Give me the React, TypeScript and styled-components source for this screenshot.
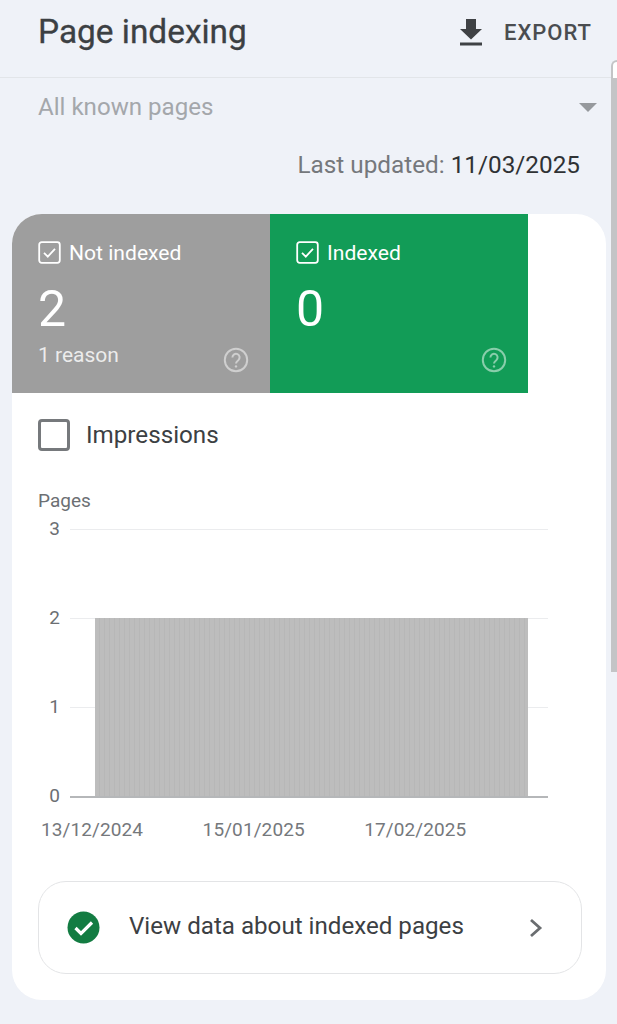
import React from "react";
import styled, { createGlobalStyle } from "styled-components";

const Global = createGlobalStyle`
  html, body { margin: 0; padding: 0; background: #eff2f8; }
  body { font-family: Roboto, "Liberation Sans", sans-serif; overflow: hidden; }
`;

const Page = styled.div`
  position: relative;
  width: 617px;
  height: 1024px;
  overflow: hidden;
  background: #eff2f8;
`;

const Header = styled.header`
  height: 78px;
  box-sizing: border-box;
  border-bottom: 1px solid #e2e5e9;
  display: flex;
  align-items: flex-start;
  justify-content: space-between;
  padding: 13px 25px 0 38px;
`;

const Title = styled.h1`
  margin: 0;
  font-size: 33.4px;
  line-height: 38px;
  font-weight: 400;
  color: #3c4043;
  -webkit-text-stroke: 0.3px #3c4043;
`;

const ExportButton = styled.div`
  display: flex;
  align-items: center;
  gap: 20px;
  height: 38px;
  font-size: 22px;
  font-weight: 500;
  letter-spacing: 1px;
  color: #4a4d50;
`;

const Filter = styled.div`
  height: 58px;
  box-sizing: border-box;
  display: flex;
  align-items: center;
  justify-content: space-between;
  padding: 0 20px 0 38px;
  font-size: 24.1px;
  color: #a4a7ab;
`;

const Caret = styled.div`
  width: 0;
  height: 0;
  border-left: 9px solid transparent;
  border-right: 9px solid transparent;
  border-top: 9px solid #96999d;
`;

const Updated = styled.div`
  height: 78px;
  box-sizing: border-box;
  padding: 14px 37px 0 0;
  text-align: right;
  font-size: 24.3px;
  line-height: 30px;
  color: #75787c;
`;

const UpdatedDate = styled.span`
  color: #2f3235;
`;

const Card = styled.section`
  margin: 0 11px 0 12px;
  height: 786px;
  background: #fff;
  border-radius: 30px;
  overflow: hidden;
`;

const Tiles = styled.div`
  display: flex;
  height: 179px;
`;

const Tile = styled.div<{ $bg: string }>`
  position: relative;
  width: 258px;
  box-sizing: border-box;
  padding: 25px 0 0 26px;
  background: ${(p) => p.$bg};
  color: #fff;
`;

const TileHead = styled.div`
  display: flex;
  align-items: center;
  gap: 8px;
  height: 26px;
  font-size: 21.1px;
`;

const TileValue = styled.div`
  margin-top: 14px;
  font-size: 50px;
  line-height: 60px;
  font-weight: 400;
`;

const TileNote = styled.div`
  margin-top: 2px;
  height: 28px;
  font-size: 21px;
  line-height: 28px;
  color: rgba(255, 255, 255, 0.82);
`;

const HelpIcon = styled.svg`
  position: absolute;
  right: 21px;
  bottom: 20px;
  width: 26px;
  height: 26px;
`;

const ImpressionRow = styled.div`
  display: flex;
  align-items: center;
  gap: 16px;
  height: 32px;
  margin: 26px 0 0 26px;
  font-size: 24.2px;
  color: #3c4043;
`;

const EmptyBox = styled.div`
  width: 32px;
  height: 32px;
  box-sizing: border-box;
  border: 3px solid #76797c;
  border-radius: 4px;
`;

const ChartTitle = styled.div`
  margin: 38px 0 0 26px;
  font-size: 19px;
  line-height: 24px;
  color: #6c6f73;
`;

const Chart = styled.div`
  margin: 16px 0 0 0;
  width: 536px;
  height: 279px;
  display: grid;
  grid-template-columns: 58px 1fr;
  grid-template-rows: 89px 89px 89px 12px;
`;

const AxisLabel = styled.div`
  font-size: 19px;
  line-height: 0;
  padding: 0 10px 0 0;
  text-align: right;
  color: #6c6f73;
  height: 0;
`;

const Plot = styled.div`
  position: relative;
  grid-row: 1 / 5;
  grid-column: 2;
`;

const BaseLine = styled.div`
  position: absolute;
  left: 0;
  right: 0;
  height: 2px;
`;

const GridLine = styled(BaseLine)`
  height: 1px;
  background: #ebecee;
`;

const AxisLine = styled(BaseLine)`
  background: #b5b7b9;
`;

const Bars = styled.div`
  position: absolute;
  left: 25px;
  top: 89px;
  width: 433px;
  height: 178px;
  background: repeating-linear-gradient(
    90deg,
    #bdbdbd 0,
    #bdbdbd 4px,
    #b7b7b7 4px,
    #b7b7b7 5px
  );
`;

const DateAxis = styled.div`
  display: flex;
  gap: 59.5px;
  margin: 10px 0 0 29px;
  font-size: 19px;
  line-height: 24px;
  letter-spacing: 0.1px;
  color: #75787c;
`;

const Cta = styled.div`
  margin: 39px 24px 0 26px;
  height: 93px;
  box-sizing: border-box;
  border: 1px solid #e3e4e6;
  border-radius: 28px;
  display: flex;
  align-items: center;
  padding: 0 38px 0 28px;
  font-size: 24.15px;
  color: #3c4043;
`;

const CtaText = styled.span`
  flex: 1;
  margin-left: 29px;
  padding-bottom: 3px;
`;

const ScrollTrack = styled.div`
  position: absolute;
  right: 0;
  top: 60px;
  width: 6px;
  height: 612px;
  box-sizing: border-box;
  border-left: 2px solid #c3c4c6;
  border-top: 2px solid #c3c4c6;
  border-radius: 7px 0 0 0;
  background: #fff;
`;

const ScrollThumb = styled.div`
  position: absolute;
  top: 16px;
  left: 0;
  right: 0;
  bottom: 0;
  background: #c3c4c6;
`;

const CheckedBox = () => (
  <svg width="23" height="23" viewBox="0 0 23 23" fill="none">
    <rect x="1.2" y="1.2" width="20.6" height="20.6" rx="2.5" stroke="#fff" strokeWidth="1.8" />
    <path d="M6 11.8l3.8 3.8 7.2-7.8" stroke="#fff" strokeWidth="1.8" />
  </svg>
);

const Help = () => (
  <HelpIcon viewBox="0 0 26 26" fill="none">
    <circle cx="13" cy="13" r="11.2" stroke="#fff" strokeOpacity="0.5" strokeWidth="2" />
    <path
      d="M9.4 10.4a3.6 3.6 0 1 1 5.9 2.8c-1.3 1-2.3 1.6-2.3 3.4"
      stroke="#fff"
      strokeOpacity="0.5"
      strokeWidth="2"
    />
    <circle cx="13" cy="19.4" r="1.2" fill="#fff" fillOpacity="0.5" />
  </HelpIcon>
);

export default function App() {
  return (
    <Page>
      <Global />
      <Header>
        <Title>Page indexing</Title>
        <ExportButton>
          <svg width="26" height="28" viewBox="0 0 26 28">
            <path d="M8 1h10v10h6L13 21.5 2 11h6z" fill="#3f4245" />
            <rect x="2" y="24.5" width="22" height="3" fill="#3f4245" />
          </svg>
          EXPORT
        </ExportButton>
      </Header>
      <Filter>
        All known pages
        <Caret />
      </Filter>
      <Updated>
        Last updated: <UpdatedDate>11/03/2025</UpdatedDate>
      </Updated>
      <Card>
        <Tiles>
          <Tile $bg="#9e9e9e">
            <TileHead>
              <CheckedBox />
              Not indexed
            </TileHead>
            <TileValue>2</TileValue>
            <TileNote>1 reason</TileNote>
            <Help />
          </Tile>
          <Tile $bg="#129c57">
            <TileHead>
              <CheckedBox />
              Indexed
            </TileHead>
            <TileValue>0</TileValue>
            <Help />
          </Tile>
        </Tiles>
        <ImpressionRow>
          <EmptyBox />
          Impressions
        </ImpressionRow>
        <ChartTitle>Pages</ChartTitle>
        <Chart>
          <AxisLabel>3</AxisLabel>
          <Plot>
            <GridLine style={{ top: 0 }} />
            <GridLine style={{ top: 89 }} />
            <GridLine style={{ top: 178 }} />
            <Bars />
            <AxisLine style={{ top: 267 }} />
          </Plot>
          <AxisLabel>2</AxisLabel>
          <AxisLabel>1</AxisLabel>
          <AxisLabel>0</AxisLabel>
        </Chart>
        <DateAxis>
          <span>13/12/2024</span>
          <span>15/01/2025</span>
          <span>17/02/2025</span>
        </DateAxis>
        <Cta>
          <svg width="33" height="33" viewBox="0 0 33 33" fill="none">
            <circle cx="16.5" cy="16.5" r="16" fill="#137c42" />
            <path d="M8.5 17l5.5 5.5L25 11.5" stroke="#fff" strokeWidth="3.2" />
          </svg>
          <CtaText>View data about indexed pages</CtaText>
          <svg width="14" height="20" viewBox="0 0 14 20" fill="none">
            <path d="M2 2l9 8-9 8" stroke="#6a6d70" strokeWidth="2.8" />
          </svg>
        </Cta>
      </Card>
      <ScrollTrack>
        <ScrollThumb />
      </ScrollTrack>
    </Page>
  );
}
